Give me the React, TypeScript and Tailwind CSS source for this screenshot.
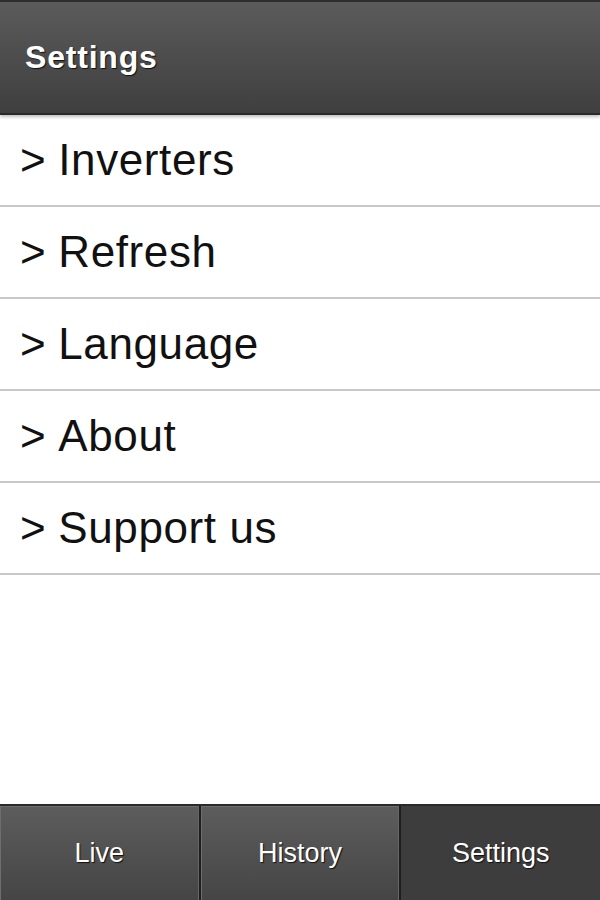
const ITEMS = ["Inverters", "Refresh", "Language", "About", "Support us"];

const TABS = [
  { label: "Live", active: false },
  { label: "History", active: false },
  { label: "Settings", active: true },
];

export default function App() {
  return (
    <div
      className="w-[600px] h-[900px] flex flex-col bg-white overflow-hidden"
      style={{ fontFamily: '"Liberation Sans", Arial, sans-serif' }}
    >
      {/* Header */}
      <header className="h-[115px] flex-shrink-0 flex items-center px-[25px] border-t-2 border-[#2e2e2e] border-b-2 border-b-[#2a2a2a] bg-gradient-to-b from-[#5b5b5b] to-[#3f3f3f] shadow-[0_2px_3px_rgba(0,0,0,0.25)]">
        <h1 className="text-[32px] font-bold text-white tracking-[0.8px] [text-shadow:1px_1px_1px_#111] -mt-[1px]">
          Settings
        </h1>
      </header>

      {/* List */}
      <ul className="flex-1">
        {ITEMS.map((item) => (
          <li
            key={item}
            className="h-[92px] flex items-center px-[20px] border-b-2 border-[#c8c8c8] text-[44px] tracking-[0.6px] text-[#111] leading-none"
          >
            <span className="mr-[12px]">&gt;</span>
            <span>{item}</span>
          </li>
        ))}
      </ul>

      {/* Tab bar */}
      <nav className="h-[96px] flex-shrink-0 flex border-t-2 border-[#2a2a2a] bg-[#2a2a2a]">
        {TABS.map((tab, i) => (
          <div
            key={tab.label}
            className={`flex-1 flex items-center justify-center text-[27px] text-white [text-shadow:1px_1px_1px_#111] ${
              i > 0 ? "border-l-2 border-[#1e1e1e]" : ""
            } ${
              tab.active
                ? "bg-[#3d3d3d]"
                : "bg-gradient-to-b from-[#5d5d5d] to-[#454545] shadow-[inset_1px_1px_0_#6e6e6e,inset_-1px_0_0_#666]"
            }`}
          >
            {tab.label}
          </div>
        ))}
      </nav>
    </div>
  );
}
